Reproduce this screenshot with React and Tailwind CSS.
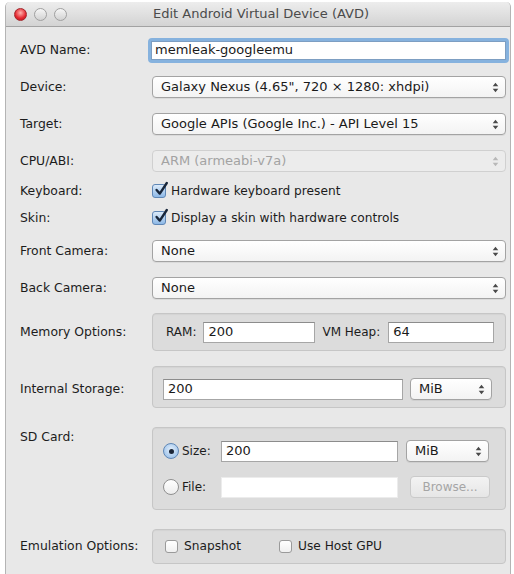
import React from "react";

function Arrows({ color = "#4a4a4a" }) {
  return (
    <svg width="7" height="11" viewBox="0 0 7 11" className="shrink-0">
      <path d="M3.5 0.8 L6.3 4.2 H0.7Z M3.5 10.2 L6.3 6.8 H0.7Z" fill={color} />
    </svg>
  );
}

function PopUp({ value, disabled = false, className = "" }) {
  return (
    <div
      className={`flex h-[22px] items-center justify-between rounded-[4px] border pl-[8px] pr-[6px] text-[13px] ${
        disabled
          ? "border-[#d0d0d0] bg-[#ececec] text-[#a3a3a3]"
          : "border-[#a3a3a3] bg-[linear-gradient(#ffffff,#f3f3f3)] text-[#1a1a1a] shadow-[0_1px_0_rgba(0,0,0,0.06)]"
      } ${className}`}
    >
      <span className="truncate">{value}</span>
      <Arrows color={disabled ? "#b8b8b8" : "#4a4a4a"} />
    </div>
  );
}

function Field({ value = "", className = "", faint = false }) {
  return (
    <div
      className={`flex h-[21px] items-center border bg-white pl-[4px] text-[13px] text-[#1a1a1a] ${
        faint ? "border-[#ececec]" : "border-[#a6a6a6] border-t-[#8c8c8c]"
      } ${className}`}
    >
      {value}
    </div>
  );
}

function CheckBox({ checked = false }) {
  if (!checked) {
    return (
      <span className="inline-block h-[13px] w-[13px] shrink-0 rounded-[3px] border border-[#9a9a9a] bg-[linear-gradient(#ffffff,#f0f0f0)]" />
    );
  }
  return (
    <span className="relative inline-block h-[14px] w-[14px] shrink-0 rounded-[3px] border border-[#5f87b6] bg-[linear-gradient(#dcebfa,#8db8e6)]">
      <svg
        className="absolute left-[1px] top-[-4px]"
        width="15"
        height="16"
        viewBox="0 0 15 16"
      >
        <path
          d="M2.6 9 L5.8 12.6 L12.8 2"
          stroke="#18263a"
          strokeWidth="2.4"
          fill="none"
          strokeLinecap="round"
          strokeLinejoin="round"
        />
      </svg>
    </span>
  );
}

function Radio({ selected = false }) {
  if (selected) {
    return (
      <span className="flex h-[16px] w-[16px] shrink-0 items-center justify-center rounded-full border border-[#5f87b6] bg-[radial-gradient(circle_at_50%_40%,#e3effb,#8db8e6)]">
        <span className="h-[5px] w-[5px] rounded-full bg-[#1b2536]" />
      </span>
    );
  }
  return (
    <span className="h-[16px] w-[16px] shrink-0 rounded-full border border-[#8f8f8f] bg-[linear-gradient(#ffffff,#ededed)]" />
  );
}

function Row({ label, children, className = "", labelClass = "" }) {
  return (
    <div className={`flex items-center ${className}`}>
      <div className={`w-[132px] shrink-0 text-[12.4px] text-[#1c1c1c] ${labelClass}`}>{label}</div>
      <div className="min-w-0 flex-1">{children}</div>
    </div>
  );
}

function Group({ children, className = "" }) {
  return (
    <div
      className={`rounded-[4px] border border-[#c6c6c6] bg-[#dcdcdc] shadow-[inset_0_1px_1px_rgba(0,0,0,0.04)] ${className}`}
    >
      {children}
    </div>
  );
}

export default function App() {
  return (
    <div className="h-[574px] w-[514px] overflow-hidden bg-white pl-[5px] pr-[3px] pt-[2px] font-['DejaVu_Sans',sans-serif]">
      <div className="flex h-[572px] flex-col overflow-hidden rounded-t-[5px] border-x border-[#b4b4b4] bg-[#e8e8e8]">
        {/* title bar */}
        <div className="grid h-[25px] shrink-0 grid-cols-[1fr_auto_1fr] items-center border-b border-[#a2a2a2] bg-[linear-gradient(#ededed,#d3d3d3)]">
          <div className="flex items-center gap-[7px] pl-[8px]">
            <span className="h-[13px] w-[13px] rounded-full border border-[#a3262b] bg-[radial-gradient(circle_at_50%_35%,#ffb2ad,#e4262f_60%,#b3151c)]" />
            <span className="h-[13px] w-[13px] rounded-full border border-[#a0a0a0] bg-[linear-gradient(#f6f6f6,#d2d2d2)]" />
            <span className="h-[13px] w-[13px] rounded-full border border-[#a0a0a0] bg-[linear-gradient(#f6f6f6,#d2d2d2)]" />
          </div>
          <span className="pl-[6px] text-[13px] text-[#4b4b4b]">
            Edit Android Virtual Device (AVD)
          </span>
          <div />
        </div>

        {/* form */}
        <div className="flex flex-col pl-[14px] pr-[4px] pt-[10px]">
          <Row label="AVD Name:" className="h-[26px]">
            <div className="-ml-[4px] -mr-[3px] flex h-[25px] items-center rounded-[4px] border-[3px] border-[#86b2de] bg-white">
              <div className="flex h-full w-full items-center border border-[#7d9ec2] pl-[3px] text-[13px] text-[#1a1a1a]">
                memleak-googleemu
              </div>
            </div>
          </Row>

          <Row label="Device:" className="mt-[11px] h-[26px]">
            <PopUp value={"Galaxy Nexus (4.65\", 720 × 1280: xhdpi)"} />
          </Row>

          <Row label="Target:" className="mt-[11px] h-[26px]">
            <PopUp value="Google APIs (Google Inc.) - API Level 15" />
          </Row>

          <Row label="CPU/ABI:" className="mt-[11px] h-[26px]">
            <PopUp value="ARM (armeabi-v7a)" disabled />
          </Row>

          <Row label="Keyboard:" className="mt-[7px] h-[20px]">
            <div className="flex items-center gap-[5px] text-[12.2px] text-[#1c1c1c]">
              <CheckBox checked />
              <span>Hardware keyboard present</span>
            </div>
          </Row>

          <Row label="Skin:" className="mt-[7px] h-[20px]">
            <div className="flex items-center gap-[5px] text-[12.2px] text-[#1c1c1c]">
              <CheckBox checked />
              <span>Display a skin with hardware controls</span>
            </div>
          </Row>

          <Row label="Front Camera:" className="mt-[10px] h-[26px]">
            <PopUp value="None" />
          </Row>

          <Row label="Back Camera:" className="mt-[11px] h-[26px]">
            <PopUp value="None" />
          </Row>

          <Row label="Memory Options:" className="mt-[12px]">
            <Group className="flex h-[38px] items-center pl-[13px] text-[12px] text-[#1c1c1c]">
              <span>RAM:</span>
              <Field value="200" className="ml-[7px] w-[112px]" />
              <span className="ml-[7px]">VM Heap:</span>
              <Field value="64" className="ml-[8px] w-[106px]" />
            </Group>
          </Row>

          <Row label="Internal Storage:" className="mt-[15px]" labelClass="pt-[5px]">
            <Group className="flex h-[42px] items-center pl-[10px] pt-[4px]">
              <Field value="200" className="w-[240px]" />
              <PopUp value="MiB" className="ml-[7px] w-[82px]" />
            </Group>
          </Row>

          <div className="mt-[19px] flex items-start">
            <div className="mt-[1px] w-[132px] shrink-0 text-[12.4px] text-[#1c1c1c]">SD Card:</div>
            <Group className="flex h-[83px] flex-1 flex-col gap-[14px] pl-[10px] pt-[12px] text-[12px] text-[#1c1c1c]">
              <div className="flex h-[22px] items-center">
                <Radio selected />
                <span className="ml-[3px] w-[39px]">Size:</span>
                <Field value="200" className="w-[177px]" />
                <PopUp value="MiB" className="ml-[8px] w-[83px]" />
              </div>
              <div className="flex h-[22px] items-center">
                <Radio />
                <span className="ml-[3px] w-[39px]">File:</span>
                <Field className="w-[177px]" faint />
                <div className="ml-[12px] flex h-[22px] w-[80px] items-center justify-center rounded-[4px] border border-[#cacaca] bg-[linear-gradient(#f3f3f3,#e6e6e6)] text-[12px] text-[#a5a5a5]">
                  Browse...
                </div>
              </div>
            </Group>
          </div>

          <Row label="Emulation Options:" className="mt-[19px]">
            <Group className="flex h-[35px] items-center pl-[12px] text-[12.2px] text-[#1c1c1c]">
              <CheckBox />
              <span className="ml-[6px] w-[95px]">Snapshot</span>
              <CheckBox />
              <span className="ml-[6px]">Use Host GPU</span>
            </Group>
          </Row>
        </div>
      </div>
    </div>
  );
}
